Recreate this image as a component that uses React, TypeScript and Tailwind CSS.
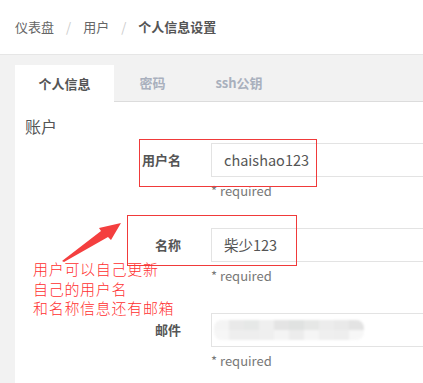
import React from "react";

const cjk = { fontFamily: '"Noto Sans CJK SC", "Noto Sans", sans-serif' };

function Field({ label, value, children }: { label: string; value?: string; children?: React.ReactNode }) {
  return (
    <div className="flex flex-col">
      <div className="flex items-center">
        <div className="w-[166px] shrink-0 text-right text-[13px] font-bold text-[#555]">{label}</div>
        <div className="ml-[30px] flex h-[34px] w-[260px] shrink-0 items-center border border-[#e3e3e3] bg-white pl-[12px] text-[14.5px] text-[#555]">
          {value}
          {children}
        </div>
      </div>
      <div className="ml-[196px] mt-[4px] text-[13px] leading-[20px] text-[#777]">* required</div>
    </div>
  );
}

function Blur() {
  const top = ["#f4f4f4", "#e9e9e9", "#e6e8e7", "#efefef", "#e4e4e4", "#e0e2e1", "#e6e7e6", "#ececec", "#e9e9e9", "#e3e3e3"];
  const bot = ["#f6f6f6", "#eeeeee", "#eeeeee", "#efefef", "#f4f4f4", "#ececec", "#f5f5f5", "#efefef", "#eeeeee", "#f7f7f7"];
  return (
    <div className="ml-[-10px] flex flex-col overflow-hidden rounded-[8px] blur-[1px]">
      <div className="flex">
        {top.map((c, i) => (
          <div key={i} className="h-[10px] w-[15px]" style={{ background: c }} />
        ))}
      </div>
      <div className="flex">
        {bot.map((c, i) => (
          <div key={i} className="h-[10px] w-[15px]" style={{ background: c }} />
        ))}
      </div>
    </div>
  );
}

export default function App() {
  return (
    <div className="relative h-[383px] w-[423px] overflow-hidden bg-[#f2f2f2]" style={cjk}>
      <div className="flex h-[55px] items-center gap-[12px] border-b border-[#e6e6e6] bg-white pl-[15px] text-[13px] text-[#666]">
        <span>仪表盘</span>
        <span className="text-[#ccc]">/</span>
        <span>用户</span>
        <span className="text-[#ccc]">/</span>
        <span className="font-bold text-[#555]">个人信息设置</span>
      </div>
      <div className="ml-[15px] mt-[10px] flex w-[470px] flex-col">
        <div className="flex h-[37px] items-stretch border-b border-[#dcdcdc] text-[13px] font-bold">
          <div className="mb-[-1px] flex w-[99px] items-center justify-center bg-white text-[#555]">个人信息</div>
          <div className="flex w-[77px] items-center justify-center text-[#a9b0bd]">密码</div>
          <div className="flex w-[96px] items-center justify-center text-[#a9b0bd]">ssh公钥</div>
        </div>
        <div className="h-[300px] bg-white pl-[10px] pt-[13px]">
          <div className="text-[16px] leading-[22px] text-[#555]">账户</div>
          <div className="ml-[-10px] mt-[6px] flex flex-col gap-[27px]">
            <Field label="用户名" value="chaishao123" />
            <Field label="名称" value="柴少123" />
            <Field label="邮件">
              <Blur />
            </Field>
          </div>
        </div>
      </div>

      {/* annotation overlays */}
      <div className="absolute left-[139px] top-[139px] h-[48px] w-[178px] border border-[#f03a3a]" />
      <div className="absolute left-[127px] top-[215px] h-[51px] w-[170px] border border-[#f03a3a]" />
      <svg className="absolute left-0 top-0" width="423" height="383" viewBox="0 0 423 383">
        <polygon points="62,261 101,231 99,228 121,223 111,240 108,237 64,262" fill="#f43f3f" />
      </svg>
      <div className="absolute left-[33px] top-[259px] text-[15px] font-light leading-[19.5px] tracking-[0.7px] text-[#ff3030]">
        <div>用户可以自己更新</div>
        <div>自己的用户名</div>
        <div>和名称信息还有邮箱</div>
      </div>
    </div>
  );
}
